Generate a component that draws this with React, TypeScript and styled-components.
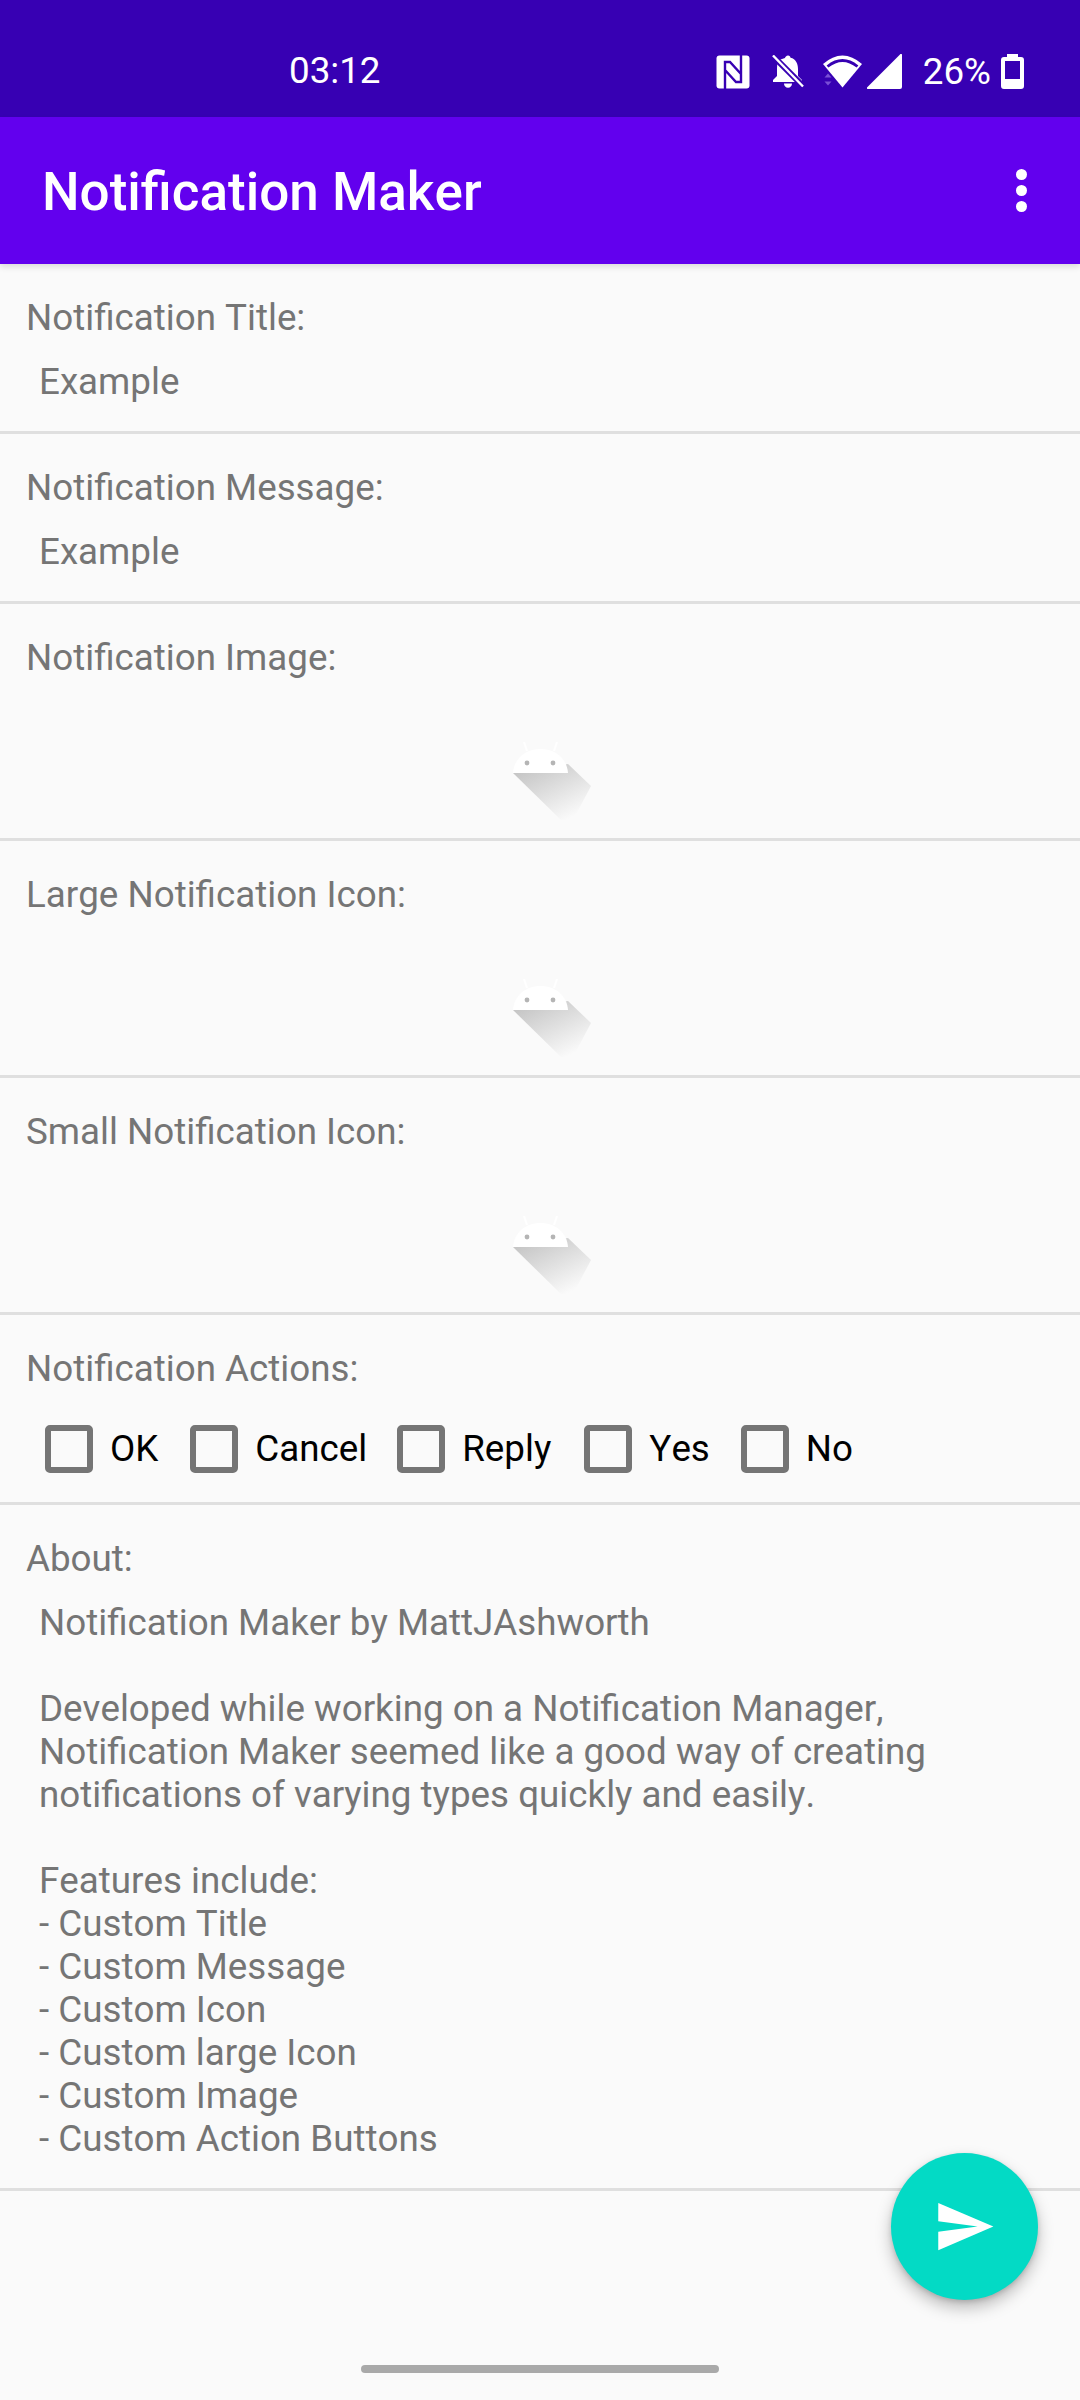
import React from "react";
import styled, { createGlobalStyle } from "styled-components";

const Global = createGlobalStyle`
  html, body { margin: 0; padding: 0; background: #fafafa; }
  body { font-family: Roboto, "Liberation Sans", sans-serif; font-kerning: none; }
  * { box-sizing: border-box; }
`;
const Screen = styled.div`
  position: relative; width: 1080px; height: 2400px; background: #fafafa; overflow: hidden;
`;
const StatusBar = styled.div`
  height: 117px; background: #3700b3; color: #fff; display: flex; align-items: center;
  padding: 24px 56px 0 289px; font-size: 36.75px;
`;
const Clock = styled.span` flex: 1; line-height: 40px; `;
const StatusIcons = styled.div` display: flex; align-items: center; margin-top: 2px; `;
const Battery = styled.span` margin: 0 10px 0 21px; line-height: 40px; `;
const AppBar = styled.header`
  position: relative; z-index: 1; height: 147px; background: #6200ee; color: #fff; display: flex;
  align-items: center; justify-content: space-between; padding: 0 42px 0 42px;
  box-shadow: 0 3px 6px rgba(0,0,0,.12);
`;
const Title = styled.h1` margin: 2px 0 0; font-size: 53px; font-weight: 500; line-height: 62px; `;
const Overflow = styled.div` display: flex; flex-direction: column; gap: 5px; padding: 0 11px; `;
const Dot = styled.i` width: 11px; height: 11px; border-radius: 50%; background: #fff; display: block; `;
const Section = styled.section`
  border-bottom: 3px solid #dfdfdf; padding: 32px 26px 0;
`;
const Label = styled.div` font-size: 36.75px; line-height: 43px; color: #757575; `;
const Value = styled.div`
  font-size: 36.75px; line-height: 43px; color: #757575; padding: 21px 13px 28px; white-space: pre-line;
`;
const ImageSlot = styled.div`
  display: flex; justify-content: center; height: 159px; padding-top: 63px; margin: 0 -26px;
`;
const Actions = styled.div` display: flex; align-items: center; padding: 35px 0 29px 19px; `;
const Action = styled.label<{ $gap: number }>`
  display: flex; align-items: center; margin-right: ${p => p.$gap}px; font-size: 36.75px; color: #000; line-height: 48px;
`;
const Box = styled.span`
  width: 48px; height: 48px; border: 6px solid #757575; border-radius: 5px; margin-right: 17px; display: block;
`;
const Fab = styled.button`
  position: absolute; left: 891px; top: 2153px; width: 147px; height: 147px; border: 0; padding: 0; border-radius: 50%;
  background: #03dac5; display: flex; align-items: center; justify-content: center;
  box-shadow: 0 8px 16px rgba(0,0,0,.25), 0 2px 5px rgba(0,0,0,.14);
`;
const Handle = styled.div`
  position: absolute; left: 361px; top: 2365px; width: 358px; height: 8px; border-radius: 4px; background: #a9a9a9;
`;

const NfcIcon = () => (
  <svg width="34" height="34" viewBox="0 0 34 34" style={{ marginRight: 22 }}>
    <rect x="0.5" y="0.5" width="33" height="33" rx="3" fill="#fff" />
    <path d="M9 34V7h5l11 12M25 0v27h-5L9 15" fill="none" stroke="#3700b3" strokeWidth="2.4" />
  </svg>
);
const BellOffIcon = () => (
  <svg width="32" height="33" viewBox="0 0 32 33" style={{ marginRight: 19 }}>
    <path d="M16 0.5c1.5 0 2.5 1 2.5 2.3C24 4 26 9 26 14v7l4 4v2H1v-2l4-4v-8c0-4 1-6 2-8l6-2c0-1 1.5-2.500 3-2.500z" fill="#fff" />
    <path d="M12 28.500h8c0 2.500-1.800 4.300-4 4.300s-4-1.800-4-4.300z" fill="#fff" />
    <path d="M1 1l30 30" stroke="#3700b3" strokeWidth="6" />
    <path d="M1 0.500l30 31" stroke="#fff" strokeWidth="2.400" />
  </svg>
);
const WifiIcon = () => (
  <svg width="39" height="33" viewBox="0 0 39 33" style={{ marginRight: 5 }}>
    <path d="M0 9Q19.500 -8 39 9L19.500 32.500z" fill="#fff" />
    <path d="M4.500 11.500Q19.500 -0.500 34.500 11.500" fill="none" stroke="#3700b3" strokeWidth="2.800" />
    <path d="M5 18.500l3.500 4h-7zM5 30.500l3.500 -4h-7z" fill="#7a4fd6" />
  </svg>
);
const SignalIcon = () => (
  <svg width="35" height="35" viewBox="0 0 35 35">
    <path d="M33 .5a1 1 0 0 1 2 1V33a2 2 0 0 1-2 2H1.500a1 1 0 0 1-1-2z" fill="#fff" />
  </svg>
);
const BatteryIcon = () => (
  <svg width="23" height="35" viewBox="0 0 23 35">
    <path d="M6 0h11v3h3a3 3 0 0 1 3 3v26a3 3 0 0 1-3 3H3a3 3 0 0 1-3-3V6a3 3 0 0 1 3-3h3z" fill="#fff" />
    <rect x="4" y="7" width="15" height="18" fill="#3700b3" />
  </svg>
);
const Droid = () => (
  <svg width="160" height="80" viewBox="-53 0 160 80">
    <defs>
      <linearGradient id="droidShadow" x1="0.15" y1="0.1" x2="0.75" y2="0.95">
        <stop offset="0" stopColor="#c6c6c6" />
        <stop offset="1" stopColor="#fafafa" />
      </linearGradient>
    </defs>
    <path d="M0 31L48 78H60L78 44L55 22z" fill="url(#droidShadow)" />
    <path d="M0 31C1 17 12 7 27.500 7S54 17 55 31z" fill="#fff" />
    <path d="M14 9L11 0M41 9L44 0" stroke="#fff" strokeWidth="2" />
    <circle cx="14" cy="21" r="2.400" fill="#b5b5b5" />
    <circle cx="40" cy="21" r="2.400" fill="#b5b5b5" />
  </svg>
);

const actions: [string, number][] = [["OK", 32], ["Cancel", 30], ["Reply", 33], ["Yes", 31], ["No", 0]];
const about = `Notification Maker by MattJAshworth

Developed while working on a Notification Manager,
Notification Maker seemed like a good way of creating
notifications of varying types quickly and easily.

Features include:
- Custom Title
- Custom Message
- Custom Icon
- Custom large Icon
- Custom Image
- Custom Action Buttons`;

export default function App() {
  return (
    <Screen>
      <Global />
      <StatusBar>
        <Clock>03:12</Clock>
        <StatusIcons>
          <NfcIcon />
          <BellOffIcon />
          <WifiIcon />
          <SignalIcon />
          <Battery>26%</Battery>
          <BatteryIcon />
        </StatusIcons>
      </StatusBar>
      <AppBar>
        <Title>Notification Maker</Title>
        <Overflow><Dot /><Dot /><Dot /></Overflow>
      </AppBar>
      <Section><Label>Notification Title:</Label><Value>Example</Value></Section>
      <Section><Label>Notification Message:</Label><Value>Example</Value></Section>
      <Section><Label>Notification Image:</Label><ImageSlot><Droid /></ImageSlot></Section>
      <Section><Label>Large Notification Icon:</Label><ImageSlot><Droid /></ImageSlot></Section>
      <Section><Label>Small Notification Icon:</Label><ImageSlot><Droid /></ImageSlot></Section>
      <Section>
        <Label>Notification Actions:</Label>
        <Actions>
          {actions.map(([name, gap]) => (
            <Action key={name} $gap={gap}><Box />{name}</Action>
          ))}
        </Actions>
      </Section>
      <Section><Label>About:</Label><Value>{about}</Value></Section>
      <Fab aria-label="Send">
        <svg width="63" height="63" viewBox="0 0 24 24"><path d="M2.01 21 23 12 2.01 3 2 10l15 2-15 2z" fill="#fff" /></svg>
      </Fab>
      <Handle />
    </Screen>
  );
}
